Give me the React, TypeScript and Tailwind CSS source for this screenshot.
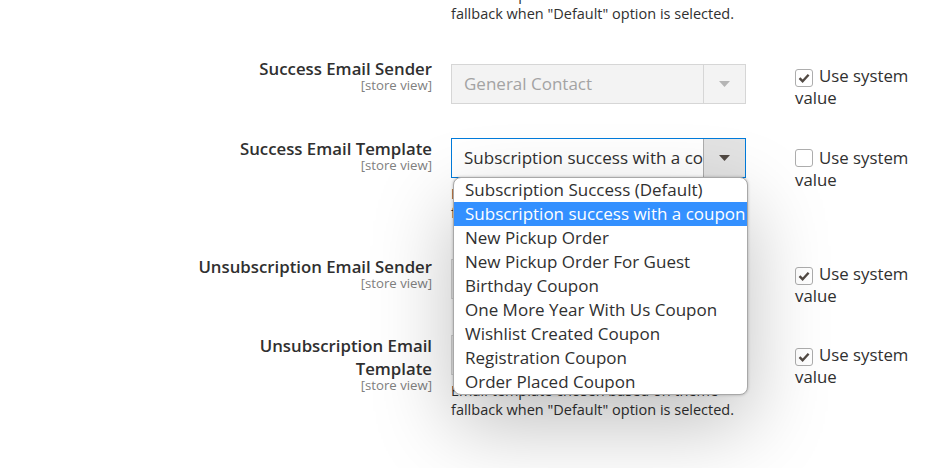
import React from "react";

const options = [
  "Subscription Success (Default)",
  "Subscription success with a coupon",
  "New Pickup Order",
  "New Pickup Order For Guest",
  "Birthday Coupon",
  "One More Year With Us Coupon",
  "Wishlist Created Coupon",
  "Registration Coupon",
  "Order Placed Coupon",
];

function Arrow({ color }: { color: string }) {
  return (
    <svg width="11" height="6" viewBox="0 0 11 6">
      <polygon points="0,0 11,0 5.5,6" fill={color} />
    </svg>
  );
}

function Checkbox({ checked, mt }: { checked: boolean; mt: string }) {
  return (
    <div className={`ml-[49px] w-[130px] text-[16.8px] leading-[22px] text-[#303030] ${mt}`}>
      <span className="relative top-[3px] mr-[6px] inline-flex h-[18px] w-[18px] items-center justify-center rounded-[3px] border border-[#adadad] bg-white align-baseline">
        {checked && (
          <svg width="14" height="14" viewBox="0 0 14 14">
            <path d="M2.5 7.2 L5.6 10.2 L11.6 3.8" fill="none" stroke="#514943" strokeWidth="2.4" />
          </svg>
        )}
      </span>
      Use system value
    </div>
  );
}

function Label({ children }: { children: React.ReactNode }) {
  return (
    <div className="w-[432px] shrink-0 text-right">
      <div className="text-[16.8px] font-semibold leading-[23px] text-[#303030]">{children}</div>
      <div className="text-[13.2px] leading-[11px] text-[#808080]">[store view]</div>
    </div>
  );
}

function DisabledSelect({ text }: { text: string }) {
  return (
    <div className="flex h-[40px] w-[295px] items-stretch border border-[#d6d6d6] bg-[#f3f3f3]">
      <div className="flex flex-1 items-center overflow-hidden whitespace-nowrap pl-[12px] text-[17px] text-[#a3a3a3]">
        {text}
      </div>
      <div className="flex w-[42px] shrink-0 items-center justify-center border-l border-[#d6d6d6]">
        <Arrow color="#b5b5b5" />
      </div>
    </div>
  );
}

function Note() {
  return (
    <div className="w-[295px] text-[14.5px] leading-[19px] text-[#303030]">
      Email template chosen based on theme fallback when "Default" option is selected.
    </div>
  );
}

export default function App() {
  return (
    <div
      className="relative h-[468px] w-[951px] overflow-hidden bg-white"
      style={{ fontFamily: '"Open Sans", "Noto Sans", sans-serif' }}
    >
      <div className="ml-[451px] mt-[-15px] h-[39px]">
        <Note />
      </div>

      {/* Row 1 */}
      <div className="mt-[33px] flex h-[80px] items-start">
        <Label>Success Email Sender</Label>
        <div className="ml-[19px] mt-[7px]">
          <DisabledSelect text="General Contact" />
        </div>
        <Checkbox checked mt="mt-[8px]" />
      </div>

      {/* Row 2 */}
      <div className="flex h-[118px] items-start">
        <Label>Success Email Template</Label>
        <div className="relative ml-[19px] mt-[1px]">
          <div className="flex h-[40px] w-[295px] items-stretch border border-[#007bdb] bg-white">
            <div className="flex flex-1 items-center overflow-hidden whitespace-nowrap pl-[12px] pr-[2px] text-[17px] text-[#303030]">
              Subscription success with a coupon
            </div>
            <div className="flex w-[42px] shrink-0 items-center justify-center border-l border-[#adadad] bg-[#e3e3e3]">
              <Arrow color="#514943" />
            </div>
          </div>
          <div className="mt-[6px]">
            <Note />
          </div>
          <div className="absolute left-[2px] top-[39px] z-10 w-[295px] overflow-hidden rounded-[8px] border border-[#a8a8a8] bg-white shadow-[0_0_3px_rgba(0,0,0,0.25),0_30px_80px_rgba(0,0,0,0.25)]">
            {options.map((o, i) => (
              <div
                key={o}
                className={`h-[24px] whitespace-nowrap pl-[11px] text-[17px] leading-[24px] ${
                  i === 1 ? "bg-[#3390ff] text-white" : "text-[#303030]"
                }`}
              >
                {o}
              </div>
            ))}
          </div>
        </div>
        <Checkbox checked={false} mt="mt-[9px]" />
      </div>

      {/* Row 3 */}
      <div className="flex h-[79px] items-start">
        <Label>Unsubscription Email Sender</Label>
        <div className="ml-[19px] mt-[4px]">
          <DisabledSelect text="General Contact" />
        </div>
        <Checkbox checked mt="mt-[8px]" />
      </div>

      {/* Row 4 */}
      <div className="flex items-start">
        <Label>
          Unsubscription Email
          <br />
          Template
        </Label>
        <div className="ml-[19px] mt-[1px]">
          <DisabledSelect text="Unsubscription Success (Default)" />
          <div className="mt-[6px]">
            <Note />
          </div>
        </div>
        <Checkbox checked mt="mt-[10px]" />
      </div>
    </div>
  );
}
